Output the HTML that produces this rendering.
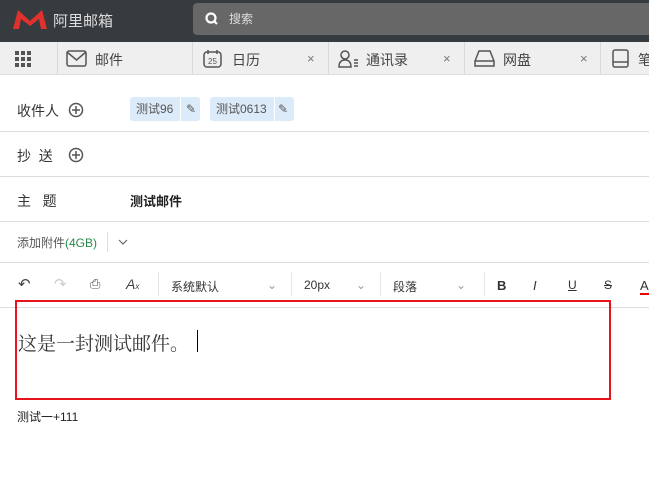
<!DOCTYPE html><html><head><meta charset="utf-8"><style>
body{margin:0;width:649px;height:497px;overflow:hidden;background:#fff;font-family:"Liberation Sans","Noto Sans CJK SC",sans-serif;color:#333;position:relative}
.a{position:absolute}
.hd{left:0;top:0;width:649px;height:42px;background:#363b40}
.tb{left:0;top:42px;width:649px;height:32px;background:#efefef;border-bottom:1px solid #ddd}
.sep{top:42px;width:1px;height:32px;background:#d8d8d8}
.t{font-size:14px;color:#444;top:50px}
.x{font-size:13px;color:#777;top:51px}
.ln{left:0;width:649px;height:1px;background:#ddd}
.lb{font-size:14px;color:#333;left:17px}
.tag{height:24px;background:#dcebfa;border-radius:3px;font-size:12px;color:#555;line-height:24px;top:97px}
.tool{font-size:12px;color:#333;top:278px}
.vs{top:272px;width:1px;height:24px;background:#e5e5e5}
</style></head><body>
<div class="a hd"></div>
<svg class="a" style="left:12px;top:8px" width="36" height="22"><path d="M1 21 L6 2 L18 13 L30 2 L35 21 L29 21 L27 11 L18 18 L9 11 L7 21Z" fill="#e0312b"/></svg>
<div class="a" style="left:53px;top:10px;font-size:15px;color:#ddd">阿里邮箱</div>
<div class="a" style="left:193px;top:3px;width:460px;height:32px;background:#676767;border-radius:4px"></div>
<svg class="a" style="left:205px;top:12px" width="14" height="14"><circle cx="6" cy="6" r="4.5" stroke="#fff" stroke-width="2.2" fill="none"/><path d="M9 9 L12 12" stroke="#fff" stroke-width="2.2"/></svg>
<div class="a" style="left:229px;top:10px;font-size:12px;color:#ddd">搜索</div>
<div class="a tb"></div>
<svg class="a" style="left:15px;top:51px" width="18" height="16" fill="#555"><rect x="0" y="0" width="4" height="4"/><rect x="6" y="0" width="4" height="4"/><rect x="12" y="0" width="4" height="4"/><rect x="0" y="6" width="4" height="4"/><rect x="6" y="6" width="4" height="4"/><rect x="12" y="6" width="4" height="4"/><rect x="0" y="12" width="4" height="4"/><rect x="6" y="12" width="4" height="4"/><rect x="12" y="12" width="4" height="4"/></svg>
<div class="a sep" style="left:57px"></div><div class="a sep" style="left:192px"></div><div class="a sep" style="left:328px"></div><div class="a sep" style="left:464px"></div><div class="a sep" style="left:600px"></div>
<svg class="a" style="left:66px;top:50px" width="22" height="18"><rect x="1" y="1" width="19" height="15" rx="2" fill="none" stroke="#555" stroke-width="1.5"/><path d="M1 2 L10.5 10 L20 2" fill="none" stroke="#555" stroke-width="1.5"/></svg>
<div class="a t" style="left:95px">邮件</div>
<svg class="a" style="left:203px;top:49px" width="20" height="20"><rect x="1" y="3" width="17" height="15" rx="3" fill="none" stroke="#555" stroke-width="1.5"/><path d="M5 1v4M14 1v4" stroke="#555" stroke-width="1.5"/><text x="9.5" y="15" font-size="8" text-anchor="middle" fill="#555" font-family="Liberation Sans">25</text></svg>
<div class="a t" style="left:232px">日历</div>
<div class="a x" style="left:307px">×</div>
<svg class="a" style="left:338px;top:50px" width="22" height="18"><circle cx="7" cy="5" r="4" fill="none" stroke="#555" stroke-width="1.5"/><path d="M1 17 Q1 10 7 10 Q13 10 13 17Z" fill="none" stroke="#555" stroke-width="1.5"/><path d="M16 10h4M16 13h4M16 16h4" stroke="#555" stroke-width="1.5"/></svg>
<div class="a t" style="left:366px">通讯录</div><div class="a x" style="left:443px">×</div>
<svg class="a" style="left:474px;top:49px" width="22" height="20"><path d="M5 2 H16 L20 12 V17 H1 V12Z" fill="none" stroke="#555" stroke-width="1.5"/><path d="M1 12 H20" stroke="#555" stroke-width="1.5"/></svg>
<div class="a t" style="left:503px">网盘</div><div class="a x" style="left:580px">×</div>
<svg class="a" style="left:612px;top:49px" width="18" height="20"><rect x="1" y="1" width="15" height="17" rx="2" fill="none" stroke="#555" stroke-width="1.5"/><path d="M1 13 H16" stroke="#555" stroke-width="1.5"/></svg>
<div class="a t" style="left:638px">笔</div>
<div class="a lb" style="top:101px">收件人</div>
<svg class="a" style="left:68px;top:102px" width="16" height="16"><circle cx="8" cy="8" r="6.5" fill="none" stroke="#555" stroke-width="1.5"/><path d="M8 4v8M4 8h8" stroke="#555" stroke-width="1.5"/></svg>
<div class="a tag" style="left:130px;width:70px"><span style="margin-left:6px">测试96</span><span style="position:absolute;left:50px;top:0;width:1px;height:24px;background:#fff"></span><span style="position:absolute;left:56px;top:0;font-size:12px">✎</span></div>
<div class="a tag" style="left:210px;width:84px"><span style="margin-left:6px">测试0613</span><span style="position:absolute;left:64px;top:0;width:1px;height:24px;background:#fff"></span><span style="position:absolute;left:68px;top:0;font-size:12px">✎</span></div>
<div class="a ln" style="top:131px"></div>
<div class="a lb" style="top:146px">抄&nbsp;&nbsp;送</div>
<svg class="a" style="left:68px;top:147px" width="16" height="16"><circle cx="8" cy="8" r="6.5" fill="none" stroke="#555" stroke-width="1.5"/><path d="M8 4v8M4 8h8" stroke="#555" stroke-width="1.5"/></svg>
<div class="a ln" style="top:176px"></div>
<div class="a lb" style="top:191px">主&nbsp;&nbsp;&nbsp;题</div>
<div class="a" style="left:130px;top:191px;font-size:13px;font-weight:bold;color:#222">测试邮件</div>
<div class="a ln" style="top:221px"></div>
<div class="a" style="left:17px;top:234px;font-size:12px;color:#555">添加附件<span style="color:#2a8a4a">(4GB)</span></div>
<div class="a" style="left:107px;top:232px;width:1px;height:20px;background:#ddd"></div>
<svg class="a" style="left:118px;top:238px" width="10" height="8"><path d="M1 2 L5 6 L9 2" fill="none" stroke="#666" stroke-width="1.2"/></svg>
<div class="a ln" style="top:262px"></div>
<div class="a" style="left:18px;top:275px;font-size:15px;color:#444">↶</div>
<div class="a" style="left:54px;top:275px;font-size:15px;color:#ccc">↷</div>
<div class="a" style="left:90px;top:276px;font-size:13px;color:#555">⎙</div>
<div class="a" style="left:126px;top:276px;font-size:14px;color:#444;font-style:italic">A<span style="font-size:8px">x</span></div>
<div class="a vs" style="left:158px"></div>
<div class="a tool" style="left:171px">系统默认</div><div class="a tool" style="left:267px;color:#999">⌄</div>
<div class="a vs" style="left:291px"></div>
<div class="a tool" style="left:304px">20px</div><div class="a tool" style="left:356px;color:#999">⌄</div>
<div class="a vs" style="left:380px"></div>
<div class="a tool" style="left:393px">段落</div><div class="a tool" style="left:456px;color:#999">⌄</div>
<div class="a vs" style="left:484px"></div>
<div class="a tool" style="left:497px;font-weight:bold;font-size:13px">B</div>
<div class="a tool" style="left:533px;font-style:italic;font-size:13px">I</div>
<div class="a tool" style="left:568px;text-decoration:underline">U</div>
<div class="a tool" style="left:604px;text-decoration:line-through">S</div>
<div class="a tool" style="left:640px;font-size:13px;border-bottom:2px solid #e00">A</div>
<div class="a ln" style="top:307px"></div>
<div class="a" style="left:15px;top:300px;width:592px;height:96px;border:2px solid #e8141c"></div>
<div class="a" style="left:18px;top:329px;font-size:19px;color:#333;font-family:'Noto Serif CJK SC',serif">这是一封测试邮件。</div>
<div class="a" style="left:197px;top:330px;width:1px;height:22px;background:#000"></div>
<div class="a" style="left:17px;top:408px;font-size:12px;color:#222">测试一+111</div>
</body></html>
